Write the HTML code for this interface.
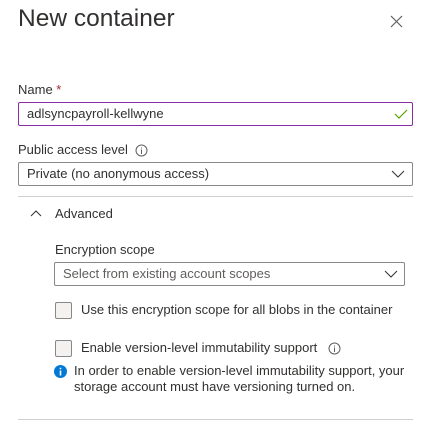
<!DOCTYPE html>
<html><head><style>
body{margin:0;width:425px;height:424px;background:#fff;font-family:"Liberation Sans",sans-serif;color:#323130;position:relative;overflow:hidden}
.a{position:absolute;white-space:nowrap}
.box{position:absolute;box-sizing:border-box;border:1px solid #8a8886;border-radius:2px}
.t{font-size:13px}
.cb{position:absolute;width:17px;height:17px;box-sizing:border-box;border:1px solid #8a8886;border-radius:2px;background:#f3f2f1}
</style></head><body>
<div class="a" style="left:18px;top:5px;font-size:24.5px;color:#323130">New container</div>
<svg class="a" style="left:390px;top:15px" width="13" height="13"><path d="M1 1L12 12M12 1L1 12" stroke="#605e5c" stroke-width="1.2"/></svg>
<div class="a t" style="left:18px;top:82px">Name <span style="color:#a4262c">*</span></div>
<div class="box" style="left:18px;top:102px;width:395px;height:24px;border-color:#8a2da5"></div>
<div class="a t" style="left:27px;top:106px">adlsyncpayroll-kellwyne</div>
<svg class="a" style="left:394px;top:108px" width="14" height="12"><path d="M1 6L5 10L13 2" stroke="#57a300" stroke-width="1.2" fill="none"/></svg>
<div class="a t" style="left:18px;top:142px">Public access level</div>
<svg class="a" style="left:135px;top:144px" width="13" height="13"><circle cx="6.5" cy="6.5" r="5.5" stroke="#605e5c" fill="none"/><path d="M6.5 5.5V10M6.5 3.5V4.5" stroke="#605e5c"/></svg>
<div class="box" style="left:18px;top:162px;width:395px;height:24px"></div>
<div class="a t" style="left:27px;top:166px">Private (no anonymous access)</div>
<svg class="a" style="left:391px;top:170px" width="14" height="8"><path d="M1 1L7 7L13 1" stroke="#323130" fill="none"/></svg>
<div style="position:absolute;left:18px;top:196px;width:395px;height:1px;background:#d2d0ce"></div>
<svg class="a" style="left:30px;top:210px" width="12" height="7"><path d="M1 6L6 1L11 6" stroke="#323130" fill="none"/></svg>
<div class="a t" style="left:55px;top:206px">Advanced</div>
<div class="a t" style="left:55px;top:242px">Encryption scope</div>
<div class="box" style="left:54px;top:262px;width:351px;height:24px"></div>
<div class="a t" style="left:63px;top:266px;color:#605e5c">Select from existing account scopes</div>
<svg class="a" style="left:384px;top:270px" width="14" height="8"><path d="M1 1L7 7L13 1" stroke="#323130" fill="none"/></svg>
<div class="cb" style="left:55px;top:302px"></div>
<div class="a t" style="left:81px;top:302px">Use this encryption scope for all blobs in the container</div>
<div class="cb" style="left:55px;top:340px"></div>
<div class="a t" style="left:81px;top:340px">Enable version-level immutability support</div>
<svg class="a" style="left:328px;top:342px" width="13" height="13"><circle cx="6.5" cy="6.5" r="5.5" stroke="#605e5c" fill="none"/><path d="M6.5 5.5V10M6.5 3.5V4.5" stroke="#605e5c"/></svg>
<svg class="a" style="left:54px;top:365px" width="13" height="13"><circle cx="6.5" cy="6.5" r="6.5" fill="#0078d4"/><path d="M6.5 5.5V10.5M6.5 2.8V4.2" stroke="#fff" stroke-width="1.6"/></svg>
<div class="a t" style="left:74px;top:363px;line-height:16px;white-space:normal;width:350px">In order to enable version-level immutability support, your storage account must have versioning turned on.</div>
<div style="position:absolute;left:18px;top:419px;width:395px;height:1px;background:#d2d0ce"></div>
</body></html>
